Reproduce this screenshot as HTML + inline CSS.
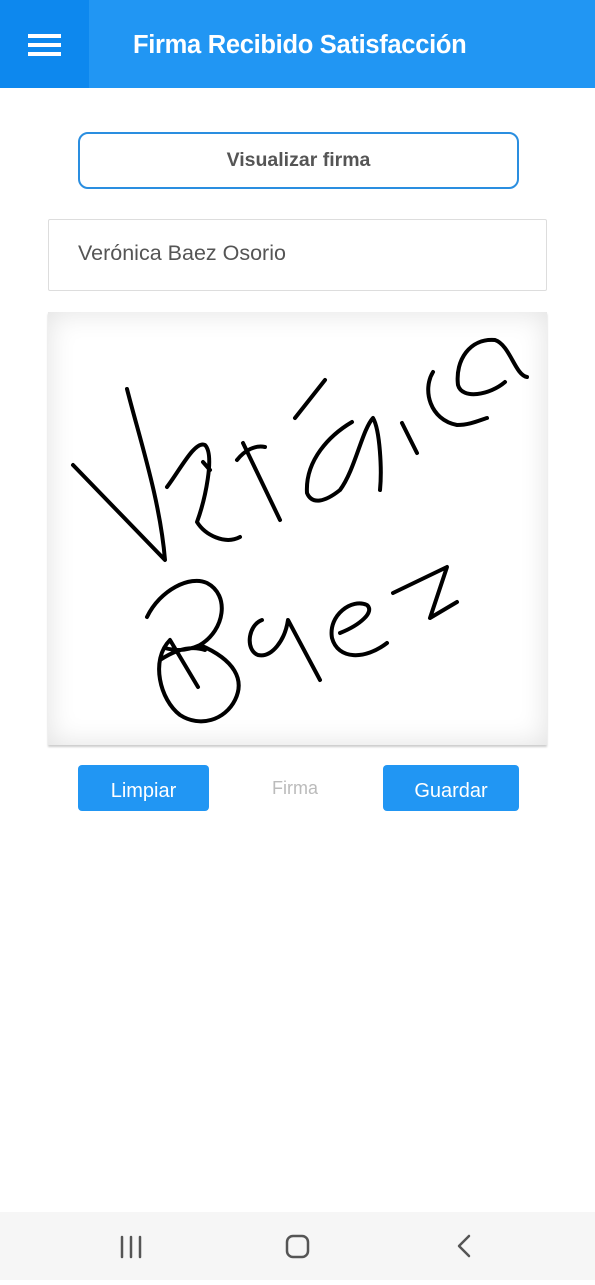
<!DOCTYPE html>
<html><head><meta charset="utf-8"><style>
body{margin:0;width:595px;height:1280px;background:#fff;font-family:"Liberation Sans",sans-serif;position:relative;overflow:hidden}
.top{position:absolute;left:0;top:0;width:595px;height:88px;background:#2196f3}
.menu{position:absolute;left:0;top:0;width:89px;height:88px;background:#0d88ee}
.menu i{position:absolute;left:28px;width:33px;height:4px;background:#fff}
.title{position:absolute;left:133px;top:31px;color:#fff;font-size:25.5px;font-weight:bold;letter-spacing:-0.3px}
.vis{position:absolute;left:78px;top:132px;width:437px;height:53px;border:2px solid #2a8ee0;border-radius:10px;text-align:center;line-height:53px;font-size:19.5px;font-weight:bold;color:#555}
.inp{position:absolute;left:48px;top:219px;border:1px solid #ddd;border-radius:2px;font-size:21.5px;color:#555;line-height:66px;box-sizing:border-box;padding-left:29px;width:499px;height:72px}
.canvas{position:absolute;left:48px;top:312px;width:499px;height:433px;background:#fff;box-shadow:inset 0 0 28px rgba(0,0,0,.12),0 2px 2px rgba(0,0,0,.2)}
.btn{position:absolute;top:765px;height:46px;background:#2196f3;border-radius:4px;color:#fff;font-size:20px;text-align:center;line-height:52px}
.nav{position:absolute;left:0;top:1212px;width:595px;height:68px;background:#f6f6f6}
</style></head><body>
<div class="top"><div class="menu"><i style="top:34px"></i><i style="top:43px"></i><i style="top:52px"></i></div><div class="title">Firma Recibido Satisfacción</div></div>
<div class="vis">Visualizar firma</div>
<div class="inp">Verónica Baez Osorio</div>
<div class="canvas"></div>
<svg style="position:absolute;left:0;top:0" width="595" height="800" fill="none" stroke="#000" stroke-width="4" stroke-linecap="round" stroke-linejoin="round">
<path d="M73,465 L165,560 C160,500 140,440 127,389"/>
<path d="M167,487 C180,470 195,440 205,445 C215,455 205,500 197,522 C205,535 225,545 240,537"/>
<path d="M203,462 L210,470 M237,460 C245,450 255,445 265,447 M243,443 L280,520"/>
<path d="M325,380 L295,418"/>
<path d="M352,422 C330,435 305,460 307,493 C312,505 325,502 340,490 C355,470 362,430 373,418 C380,430 382,470 380,490"/>
<path d="M402,423 L417,453"/>
<path d="M433,372 C422,390 430,420 457,425 C470,425 480,420 487,418"/>
<path d="M527,377 C515,375 510,345 495,340 C470,338 455,360 458,385 C462,400 490,395 505,382"/>
<path d="M147,617 C160,590 190,575 207,583 C230,595 225,630 200,645 C185,652 172,650 165,648 M198,687 L170,640 M170,640 C150,660 160,700 180,715 C200,728 225,720 235,700 C245,680 235,660 200,645 M160,660 C175,650 190,645 205,650"/>
<path d="M262,620 C248,625 245,650 258,655 C272,658 285,640 288,620 L320,680"/>
<path d="M340,633 C360,625 375,612 367,605 C352,598 328,615 332,638 C338,660 365,660 387,643"/>
<path d="M393,593 L447,567 L430,618 L457,602"/>
</svg>
<div class="btn" style="left:78px;width:131px">Limpiar</div>
<div style="position:absolute;left:272px;top:778px;font-size:18px;color:#bbb">Firma</div>
<div class="btn" style="left:383px;width:136px">Guardar</div>
<div class="nav">
<svg width="595" height="68" fill="none" stroke="#555" stroke-width="2.5" stroke-linecap="round" stroke-linejoin="round">
<path d="M122,25v20M131,25v20M140,25v20"/>
<rect x="287" y="24" width="21" height="21" rx="6"/>
<path d="M469,24 l-10,10 l10,10"/>
</svg></div>
</body></html>
